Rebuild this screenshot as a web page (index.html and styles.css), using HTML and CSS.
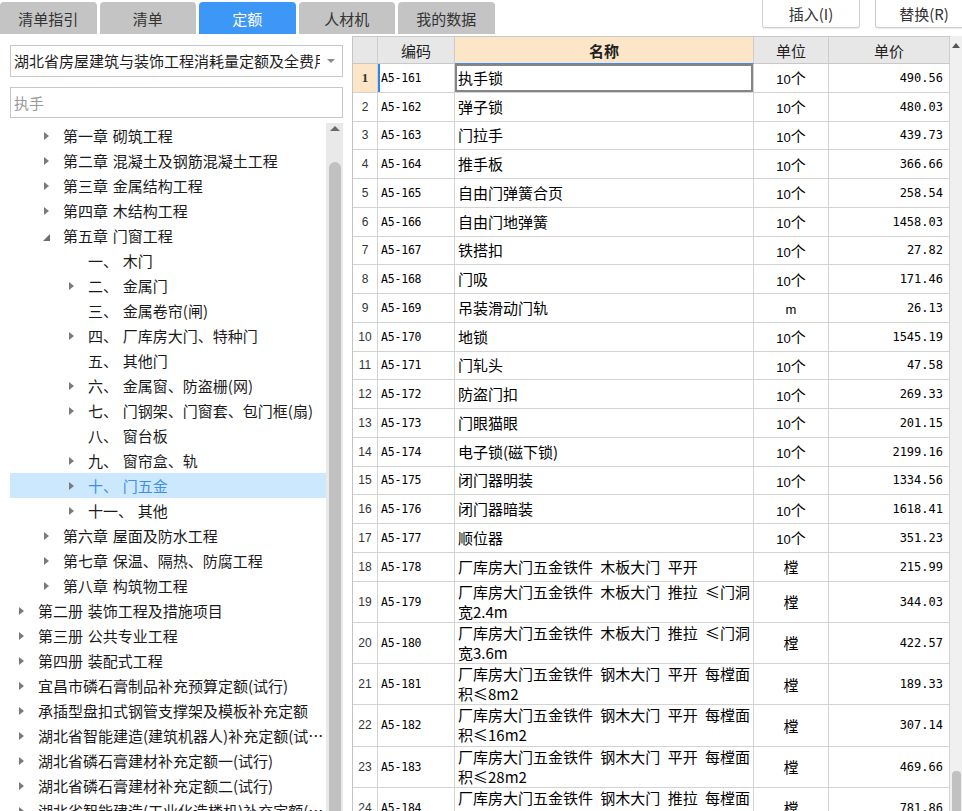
FILE: index.html
```html
<!DOCTYPE html>
<html lang="zh-CN">
<head>
<meta charset="utf-8">
<title>定额</title>
<link rel="stylesheet" href="styles.css">
</head>
<body>
<div class="topbar">
  <div class="tabs">
    <div class="tab">清单指引</div>
    <div class="tab">清单</div>
    <div class="tab active">定额</div>
    <div class="tab">人材机</div>
    <div class="tab">我的数据</div>
  </div>
  <div class="actions">
    <div class="btn">插入(I)</div>
    <div class="btn">替换(R)</div>
  </div>
</div>
<div class="main">
  <div class="left">
    <div class="select">
      <div class="select-text">湖北省房屋建筑与装饰工程消耗量定额及全费用基价表</div>
      <div class="select-arrow"></div>
    </div>
    <div class="search"><span class="search-text">执手</span></div>
    <div class="tree">
      <div class="tree-list">
        <div class="node l2"><span class="tg"><i class="ar"></i></span><span class="tx">第一章 砌筑工程</span></div>
        <div class="node l2"><span class="tg"><i class="ar"></i></span><span class="tx">第二章 混凝土及钢筋混凝土工程</span></div>
        <div class="node l2"><span class="tg"><i class="ar"></i></span><span class="tx">第三章 金属结构工程</span></div>
        <div class="node l2"><span class="tg"><i class="ar"></i></span><span class="tx">第四章 木结构工程</span></div>
        <div class="node l2"><span class="tg"><i class="ad"></i></span><span class="tx">第五章 门窗工程</span></div>
        <div class="node l3"><span class="tg"></span><span class="tx">一、 木门</span></div>
        <div class="node l3"><span class="tg"><i class="ar"></i></span><span class="tx">二、 金属门</span></div>
        <div class="node l3"><span class="tg"></span><span class="tx">三、 金属卷帘(闸)</span></div>
        <div class="node l3"><span class="tg"><i class="ar"></i></span><span class="tx">四、 厂库房大门、特种门</span></div>
        <div class="node l3"><span class="tg"></span><span class="tx">五、 其他门</span></div>
        <div class="node l3"><span class="tg"><i class="ar"></i></span><span class="tx">六、 金属窗、防盗栅(网)</span></div>
        <div class="node l3"><span class="tg"><i class="ar"></i></span><span class="tx">七、 门钢架、门窗套、包门框(扇)</span></div>
        <div class="node l3"><span class="tg"></span><span class="tx">八、 窗台板</span></div>
        <div class="node l3"><span class="tg"><i class="ar"></i></span><span class="tx">九、 窗帘盒、轨</span></div>
        <div class="node l3 sel"><span class="tg"><i class="ar"></i></span><span class="tx">十、 门五金</span></div>
        <div class="node l3"><span class="tg"><i class="ar"></i></span><span class="tx">十一、 其他</span></div>
        <div class="node l2"><span class="tg"><i class="ar"></i></span><span class="tx">第六章 屋面及防水工程</span></div>
        <div class="node l2"><span class="tg"><i class="ar"></i></span><span class="tx">第七章 保温、隔热、防腐工程</span></div>
        <div class="node l2"><span class="tg"><i class="ar"></i></span><span class="tx">第八章 构筑物工程</span></div>
        <div class="node l1"><span class="tg"><i class="ar"></i></span><span class="tx">第二册 装饰工程及措施项目</span></div>
        <div class="node l1"><span class="tg"><i class="ar"></i></span><span class="tx">第三册 公共专业工程</span></div>
        <div class="node l1"><span class="tg"><i class="ar"></i></span><span class="tx">第四册 装配式工程</span></div>
        <div class="node l1"><span class="tg"><i class="ar"></i></span><span class="tx">宜昌市磷石膏制品补充预算定额(试行)</span></div>
        <div class="node l1"><span class="tg"><i class="ar"></i></span><span class="tx">承插型盘扣式钢管支撑架及模板补充定额</span></div>
        <div class="node l1"><span class="tg"><i class="ar"></i></span><span class="tx">湖北省智能建造(建筑机器人)补充定额(试行)</span></div>
        <div class="node l1"><span class="tg"><i class="ar"></i></span><span class="tx">湖北省磷石膏建材补充定额一(试行)</span></div>
        <div class="node l1"><span class="tg"><i class="ar"></i></span><span class="tx">湖北省磷石膏建材补充定额二(试行)</span></div>
        <div class="node l1"><span class="tg"><i class="ar"></i></span><span class="tx">湖北省智能建造(工业化造楼机)补充定额(试行)</span></div>
      </div>
      <div class="vscroll">
        <div class="up"></div>
        <div class="thumb"></div>
      </div>
    </div>
  </div>
  <div class="right">
    <table class="grid">
      <colgroup>
        <col class="c-no"><col class="c-code"><col class="c-name"><col class="c-unit"><col class="c-price">
      </colgroup>
      <thead>
        <tr class="hr">
          <th></th><th>编码</th><th class="h-active">名称</th><th>单位</th><th>单价</th>
        </tr>
      </thead>
      <tbody>
        <tr class="r1 cur"><td class="no">1</td><td class="code">A5-161</td><td class="name">执手锁</td><td class="unit"><span class="d">10</span>个</td><td class="price">490.56</td></tr>
        <tr class="r1"><td class="no">2</td><td class="code">A5-162</td><td class="name">弹子锁</td><td class="unit"><span class="d">10</span>个</td><td class="price">480.03</td></tr>
        <tr class="r1"><td class="no">3</td><td class="code">A5-163</td><td class="name">门拉手</td><td class="unit"><span class="d">10</span>个</td><td class="price">439.73</td></tr>
        <tr class="r1"><td class="no">4</td><td class="code">A5-164</td><td class="name">推手板</td><td class="unit"><span class="d">10</span>个</td><td class="price">366.66</td></tr>
        <tr class="r1"><td class="no">5</td><td class="code">A5-165</td><td class="name">自由门弹簧合页</td><td class="unit"><span class="d">10</span>个</td><td class="price">258.54</td></tr>
        <tr class="r1"><td class="no">6</td><td class="code">A5-166</td><td class="name">自由门地弹簧</td><td class="unit"><span class="d">10</span>个</td><td class="price">1458.03</td></tr>
        <tr class="r1"><td class="no">7</td><td class="code">A5-167</td><td class="name">铁搭扣</td><td class="unit"><span class="d">10</span>个</td><td class="price">27.82</td></tr>
        <tr class="r1"><td class="no">8</td><td class="code">A5-168</td><td class="name">门吸</td><td class="unit"><span class="d">10</span>个</td><td class="price">171.46</td></tr>
        <tr class="r1"><td class="no">9</td><td class="code">A5-169</td><td class="name">吊装滑动门轨</td><td class="unit"><span class="d">m</span></td><td class="price">26.13</td></tr>
        <tr class="r1"><td class="no">10</td><td class="code">A5-170</td><td class="name">地锁</td><td class="unit"><span class="d">10</span>个</td><td class="price">1545.19</td></tr>
        <tr class="r1"><td class="no">11</td><td class="code">A5-171</td><td class="name">门轧头</td><td class="unit"><span class="d">10</span>个</td><td class="price">47.58</td></tr>
        <tr class="r1"><td class="no">12</td><td class="code">A5-172</td><td class="name">防盗门扣</td><td class="unit"><span class="d">10</span>个</td><td class="price">269.33</td></tr>
        <tr class="r1"><td class="no">13</td><td class="code">A5-173</td><td class="name">门眼猫眼</td><td class="unit"><span class="d">10</span>个</td><td class="price">201.15</td></tr>
        <tr class="r1"><td class="no">14</td><td class="code">A5-174</td><td class="name">电子锁(磁下锁)</td><td class="unit"><span class="d">10</span>个</td><td class="price">2199.16</td></tr>
        <tr class="r1"><td class="no">15</td><td class="code">A5-175</td><td class="name">闭门器明装</td><td class="unit"><span class="d">10</span>个</td><td class="price">1334.56</td></tr>
        <tr class="r1"><td class="no">16</td><td class="code">A5-176</td><td class="name">闭门器暗装</td><td class="unit"><span class="d">10</span>个</td><td class="price">1618.41</td></tr>
        <tr class="r1"><td class="no">17</td><td class="code">A5-177</td><td class="name">顺位器</td><td class="unit"><span class="d">10</span>个</td><td class="price">351.23</td></tr>
        <tr class="r1"><td class="no">18</td><td class="code">A5-178</td><td class="name">厂库房大门五金铁件 木板大门 平开</td><td class="unit">樘</td><td class="price">215.99</td></tr>
        <tr class="r2"><td class="no">19</td><td class="code">A5-179</td><td class="name">厂库房大门五金铁件 木板大门 推拉 ≤门洞<br>宽2.4m</td><td class="unit">樘</td><td class="price">344.03</td></tr>
        <tr class="r2"><td class="no">20</td><td class="code">A5-180</td><td class="name">厂库房大门五金铁件 木板大门 推拉 ≤门洞<br>宽3.6m</td><td class="unit">樘</td><td class="price">422.57</td></tr>
        <tr class="r2"><td class="no">21</td><td class="code">A5-181</td><td class="name">厂库房大门五金铁件 钢木大门 平开 每樘面<br>积≤8m2</td><td class="unit">樘</td><td class="price">189.33</td></tr>
        <tr class="r2"><td class="no">22</td><td class="code">A5-182</td><td class="name">厂库房大门五金铁件 钢木大门 平开 每樘面<br>积≤16m2</td><td class="unit">樘</td><td class="price">307.14</td></tr>
        <tr class="r2"><td class="no">23</td><td class="code">A5-183</td><td class="name">厂库房大门五金铁件 钢木大门 平开 每樘面<br>积≤28m2</td><td class="unit">樘</td><td class="price">469.66</td></tr>
        <tr class="r2"><td class="no">24</td><td class="code">A5-184</td><td class="name">厂库房大门五金铁件 钢木大门 推拉 每樘面<br>积≤8m2</td><td class="unit">樘</td><td class="price">781.86</td></tr>
      </tbody>
    </table>
    <div class="tscroll">
      <div class="tup"></div>
      <div class="tthumb"></div>
    </div>
  </div>
</div>
</body>
</html>
```

FILE: styles.css
```css
* { box-sizing: border-box; }
html, body { margin: 0; padding: 0; }
body {
  width: 962px;
  height: 811px;
  overflow: hidden;
  background: #fff;
  font-family: "Noto Sans CJK SC", "Microsoft YaHei", sans-serif;
  font-size: 15px;
  color: #1e1e1e;
}

/* top bar */
.topbar { display: flex; height: 36px; align-items: flex-start; }
.tabs { display: flex; gap: 3px; padding-top: 2px; }
.tab {
  width: 96.5px;
  height: 32px;
  background: #c4c4c4;
  border-radius: 4px 4px 0 0;
  display: flex;
  align-items: center;
  justify-content: center;
  color: #333;
  font-size: 15px;
  line-height: 1;
}
.tab.active { background: #3d97f7; color: #fff; }
.actions { margin-left: auto; margin-right: -11px; display: flex; gap: 15px; }
.btn {
  width: 98px;
  height: 28px;
  border: 1px solid #cfcfcf;
  border-top: none;
  border-radius: 0 0 3px 3px;
  background: #fff;
  box-shadow: 0 1px 1px rgba(0,0,0,0.08);
  display: flex;
  align-items: center;
  justify-content: center;
  color: #333;
  font-size: 15px;
  line-height: 1;
}

/* main */
.main { display: flex; height: 775px; }
.left {
  width: 352px;
  flex: none;
  padding: 9px 9px 0 10px;
  display: flex;
  flex-direction: column;
}
.select {
  height: 32px;
  border: 1px solid #c8c8c8;
  display: flex;
  align-items: center;
  padding-left: 3px;
}
.select-text {
  width: 306px;
  overflow: hidden;
  white-space: nowrap;
  color: #1e1e1e;
  line-height: 30px;
}
.select-arrow {
  margin-left: auto;
  margin-right: 7px;
  width: 0; height: 0;
  border-left: 4px solid transparent;
  border-right: 4px solid transparent;
  border-top: 4px solid #8a8a8a;
}
.search {
  margin-top: 10px;
  height: 31px;
  border: 1px solid #c8c8c8;
  display: flex;
  align-items: center;
  padding-left: 3px;
}
.search-text { color: #9a9a9a; }

.tree { margin-top: 5px; flex: 1; display: flex; min-height: 0; }
.tree-list { flex: 1; min-width: 0; overflow: hidden; }
.node {
  height: 25px;
  display: flex;
  align-items: center;
  white-space: nowrap;
  word-spacing: 1.5px;
  color: #1a1a1a;
}
.node.l1 { padding-left: 8px; }
.node.l2 { padding-left: 33px; }
.node.l3 { padding-left: 58px; }
.node.sel { background: #cce8ff; }
.node.sel .tx { color: #3f8fe6; }
.tg { width: 20px; flex: none; display: flex; align-items: center; height: 25px; }
.tx { overflow: hidden; text-overflow: ellipsis; min-width: 0; line-height: 25px; }
.ar {
  display: block;
  width: 0; height: 0;
  border-left: 5px solid #7a7a7a;
  border-top: 4.5px solid transparent;
  border-bottom: 4.5px solid transparent;
  margin-left: 1px;
}
.ad {
  display: block;
  width: 0; height: 0;
  border-bottom: 7px solid #6e6e6e;
  border-left: 7px solid transparent;
  margin-top: 3px;
}
.vscroll {
  width: 17px;
  flex: none;
  background: #e9e9e9;
  display: flex;
  flex-direction: column;
  align-items: center;
}
.vscroll .up {
  margin-top: 3px;
  width: 0; height: 0;
  border-left: 5px solid transparent;
  border-right: 5px solid transparent;
  border-bottom: 5px solid #6a6a6a;
}
.vscroll .thumb {
  margin-top: 31px;
  width: 12px;
  flex: 1;
  background: #c1c1c1;
  border-radius: 6px 6px 0 0;
}

/* right table */
.right { flex: 1; display: flex; min-width: 0; }
.grid {
  border-collapse: separate;
  border-spacing: 0;
  table-layout: fixed;
  width: 598px;
  flex: none;
  align-self: flex-start;
  border-left: 1px solid #c4c4c4;
  border-top: 1px solid #c8c8c8;
  color: #000;
}
.c-no { width: 25px; }
.c-code { width: 77px; }
.c-name { width: 299px; }
.c-unit { width: 75px; }
.c-price { width: 121px; }
.grid th, .grid td {
  border-right: 1px solid #d3d3d3;
  border-bottom: 1px solid #d3d3d3;
  padding: 0;
  overflow: hidden;
  white-space: nowrap;
  vertical-align: middle;
}
.grid th {
  height: 27px;
  background: #e7e7e7;
  font-weight: normal;
  font-size: 15px;
  text-align: center;
  color: #222;
  border-right-color: #cdcdcd;
  border-bottom-color: #c8c8c8;
}
.grid th.h-active {
  background: #fde6c8;
  font-weight: bold;
  border-bottom: 1px solid #3d8ff5;
}
.grid tr.r1 td { height: 28.75px; }
.grid tr.r2 td { height: 41.25px; }
.grid td.no {
  text-align: center;
  font-family: "Liberation Sans", Arial, sans-serif;
  font-size: 12px;
  color: #333;
}
.grid tr.cur td.no { background: #fde6c8; font-family: "Liberation Serif", serif; font-weight: bold; font-size: 13px; }
.grid tr.cur td.code { box-shadow: inset 2px 0 0 #2f86f0; }
.grid tr.cur td.name { box-shadow: inset 0 0 0 2px #858585; }
.grid td.code {
  padding-left: 3px;
  font-family: "DejaVu Sans Mono", "Liberation Mono", monospace;
  font-size: 11.5px;
  letter-spacing: -0.2px;
}
.grid td.name {
  padding-left: 3px;
  font-size: 15px;
  line-height: 20px;
  word-spacing: 4px;
}
.grid td.unit { text-align: center; font-size: 15px; }
.grid td.unit .d {
  font-family: "Liberation Sans", Arial, sans-serif;
  font-size: 13px;
}
.grid td.price {
  text-align: right;
  padding-right: 6px;
  font-family: "DejaVu Sans Mono", "Liberation Mono", monospace;
  font-size: 12px;
}
.tscroll {
  width: 12px;
  margin-left: auto;
  background: #f0f0f0;
  display: flex;
  flex-direction: column;
  align-items: center;
}
.tup {
  margin-top: 7px;
  width: 0; height: 0;
  border-left: 4px solid transparent;
  border-right: 4px solid transparent;
  border-bottom: 5px solid #555;
}
.tthumb {
  margin-top: auto;
  width: 9px;
  height: 40px;
  background: #c1c1c1;
  border-radius: 4px 4px 0 0;
}
```
